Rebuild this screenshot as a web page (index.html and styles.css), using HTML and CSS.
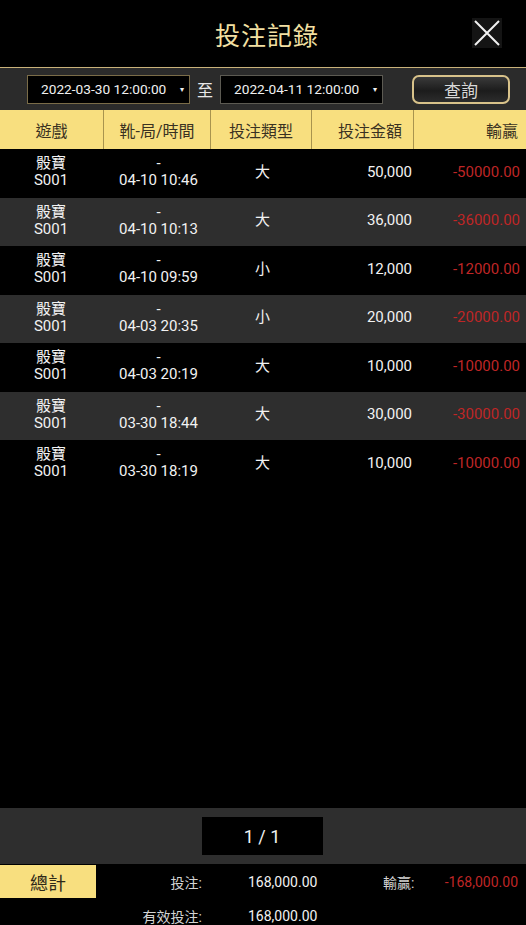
FILE: index.html
```html
<!DOCTYPE html>
<html lang="zh-Hant">
<head>
    <meta charset="UTF-8">
    <meta name="viewport" content="width=device-width, initial-scale=1.0">
    <title>投注記錄</title>
    <link rel="stylesheet" href="styles.css">
</head>
<body>
    <div class="page">
        <header class="top">
            <h1>投注記錄</h1>
            <button class="close" type="button" aria-label="close">
                <svg width="30" height="30" viewBox="0 0 30 30">
                    <path d="M3 3 L27 27 M27 3 L3 27" stroke="#f2f2f2" stroke-width="2" fill="none"/>
                </svg>
            </button>
        </header>

        <div class="filter">
            <div class="date first">
                <span>2022-03-30 12:00:00</span>
                <span class="arrow">▾</span>
            </div>
            <span class="to">至</span>
            <div class="date">
                <span>2022-04-11 12:00:00</span>
                <span class="arrow">▾</span>
            </div>
            <button class="query" type="button">查詢</button>
        </div>

        <div class="thead">
            <div class="th">遊戲</div>
            <div class="th">靴-局/時間</div>
            <div class="th">投注類型</div>
            <div class="th right">投注金額</div>
            <div class="th right last">輸贏</div>
        </div>

        <div class="rows">
            <div class="row">
                <div class="cell game">骰寶<br>S001</div>
                <div class="cell time">-<br>04-10 10:46</div>
                <div class="cell type">大</div>
                <div class="cell amount">50,000</div>
                <div class="cell result">-50000.00</div>
            </div>
            <div class="row">
                <div class="cell game">骰寶<br>S001</div>
                <div class="cell time">-<br>04-10 10:13</div>
                <div class="cell type">大</div>
                <div class="cell amount">36,000</div>
                <div class="cell result">-36000.00</div>
            </div>
            <div class="row">
                <div class="cell game">骰寶<br>S001</div>
                <div class="cell time">-<br>04-10 09:59</div>
                <div class="cell type">小</div>
                <div class="cell amount">12,000</div>
                <div class="cell result">-12000.00</div>
            </div>
            <div class="row">
                <div class="cell game">骰寶<br>S001</div>
                <div class="cell time">-<br>04-03 20:35</div>
                <div class="cell type">小</div>
                <div class="cell amount">20,000</div>
                <div class="cell result">-20000.00</div>
            </div>
            <div class="row">
                <div class="cell game">骰寶<br>S001</div>
                <div class="cell time">-<br>04-03 20:19</div>
                <div class="cell type">大</div>
                <div class="cell amount">10,000</div>
                <div class="cell result">-10000.00</div>
            </div>
            <div class="row">
                <div class="cell game">骰寶<br>S001</div>
                <div class="cell time">-<br>03-30 18:44</div>
                <div class="cell type">大</div>
                <div class="cell amount">30,000</div>
                <div class="cell result">-30000.00</div>
            </div>
            <div class="row">
                <div class="cell game">骰寶<br>S001</div>
                <div class="cell time">-<br>03-30 18:19</div>
                <div class="cell type">大</div>
                <div class="cell amount">10,000</div>
                <div class="cell result">-10000.00</div>
            </div>
        </div>

        <div class="pager">
            <div class="page-box">1 / 1</div>
        </div>

        <div class="totals">
            <div class="total-tag">總計</div>
            <div class="t-label">投注:</div>
            <div class="t-value">168,000.00</div>
            <div class="t-label2">輸贏:</div>
            <div class="t-value2">-168,000.00</div>
            <div></div>
            <div class="t-label">有效投注:</div>
            <div class="t-value">168,000.00</div>
        </div>
    </div>
</body>
</html>
```

FILE: styles.css
```css
* {
    box-sizing: border-box;
}

body {
    margin: 0;
    background-color: #000;
    font-family: Roboto, "Noto Sans CJK TC", sans-serif;
    color: #f2f2f2;
}

.page {
    width: 526px;
    height: 925px;
    overflow: hidden;
    display: flex;
    flex-direction: column;
}

.top {
    position: relative;
    height: 67px;
    display: flex;
    justify-content: center;
    align-items: center;
    padding-left: 8px;
}

.top h1 {
    margin: 0;
    font-size: 25px;
    font-weight: 400;
    color: #f3e0a3;
    letter-spacing: 1px;
}

.close {
    position: absolute;
    right: 24px;
    top: 18px;
    width: 30px;
    height: 30px;
    padding: 0;
    border: none;
    background-color: #141414;
    display: flex;
}

.filter {
    height: 43px;
    border-top: 1px solid #c9b27a;
    background-color: #2b2b2b;
    display: flex;
    align-items: center;
    padding-left: 27px;
}

.date {
    width: 163px;
    height: 29px;
    background-color: #000;
    border: 1px solid #5c5a52;
    display: flex;
    align-items: center;
    justify-content: space-between;
    padding: 0 5px 0 13px;
    font-size: 13.7px;
    color: #f0f0f0;
}

.date.first {
    border-color: #7a6c48;
}

.arrow {
    font-size: 8px;
}

.to {
    width: 30px;
    text-align: center;
    font-size: 16px;
    color: #e8e8e8;
}

.query {
    margin-left: 29px;
    width: 98px;
    height: 29px;
    border: 2px solid #d8c28a;
    border-radius: 7px;
    background: linear-gradient(to bottom, #3a3a3a, #1c1c1c 55%, #2c2c2c);
    color: #d8d8d8;
    font-family: Roboto, "Noto Sans CJK TC", sans-serif;
    font-size: 17px;
    padding: 0;
}

.thead {
    height: 39px;
    background-color: #f8df7f;
    display: grid;
    grid-template-columns: 104px 107px 101px 102px 112px;
}

.th {
    display: flex;
    align-items: center;
    justify-content: center;
    font-size: 16px;
    color: #3a3222;
    border-right: 1px solid #a8944e;
}

.th.right {
    justify-content: flex-end;
    padding-right: 11px;
}

.th.last {
    border-right: none;
    padding-right: 8px;
}

.rows {
    flex: 1;
}

.row {
    height: 48.5px;
    display: grid;
    grid-template-columns: 104px 107px 101px 102px 112px;
    align-items: center;
    font-size: 15px;
    line-height: 17px;
}

.row:nth-child(even) {
    background-color: #2e2e2e;
}

.cell {
    text-align: center;
    padding-bottom: 2px;
}

.game {
    padding-right: 2px;
}

.time {
    padding-left: 2px;
}

.type {
    font-size: 15px;
    padding-left: 2px;
}

.amount {
    text-align: right;
    padding-right: 2px;
}

.result {
    text-align: right;
    padding-right: 6px;
    color: #bf2626;
}

.pager {
    height: 56px;
    background-color: #2e2e2e;
    display: flex;
    justify-content: center;
    align-items: center;
    padding-right: 2px;
}

.page-box {
    width: 121px;
    height: 38px;
    background-color: #000;
    display: flex;
    justify-content: center;
    align-items: center;
    font-size: 18px;
    color: #f2f2f2;
}

.totals {
    height: 61px;
    padding-top: 1px;
    display: grid;
    grid-template-columns: 96px 106px 181px 57px 86px;
    grid-template-rows: 33px 22px;
    row-gap: 7px;
    align-items: center;
    font-size: 14px;
}

.total-tag {
    height: 33px;
    background-color: #f8df7f;
    color: #2e2818;
    font-size: 18px;
    display: flex;
    align-items: center;
    justify-content: center;
}

.t-label {
    text-align: right;
    color: #d4d4d4;
}

.t-value {
    padding-left: 46px;
}

.t-label2 {
    color: #d4d4d4;
}

.t-value2 {
    text-align: right;
    padding-right: 8px;
    color: #bf2626;
}
```
